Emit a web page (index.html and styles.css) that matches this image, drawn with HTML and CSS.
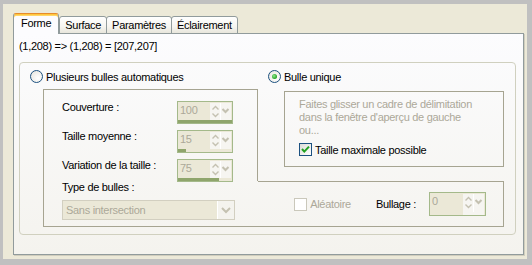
FILE: index.html
```html
<!DOCTYPE html>
<html lang="fr">
<head>
    <meta charset="UTF-8">
    <title>Forme</title>
    <link rel="stylesheet" href="styles.css">
</head>
<body>
    <div class="window">
        <div class="tabs">
            <div class="tab active">Forme</div>
            <div class="tab">Surface</div>
            <div class="tab">Paramètres</div>
            <div class="tab">Éclairement</div>
        </div>
        <div class="panel">
            <div class="coords">(1,208) =&gt; (1,208) = [207,207]</div>
            <div class="group">
                <div class="col-left">
                    <div class="option"><span class="radio"></span>Plusieurs bulles automatiques</div>
                    <div class="frame-left">
                        <div class="spins">
                            <div class="spin-row">
                                <span class="lbl">Couverture :</span>
                                <div class="spin">
                                    <div class="spin-top">
                                        <span class="spin-val">100</span>
                                        <span class="spin-btns"><svg width="21" height="17" viewBox="0 0 21 17"><path d="M2.5 6.5 L5.5 3.5 L8.5 6.5 M2.5 10.5 L5.5 13.5 L8.5 10.5" fill="none" stroke="#c4c1b1" stroke-width="1.4"/><path d="M10.5 0 V17" stroke="#fff"/><path d="M12.5 6 L15.5 9 L18.5 6" fill="none" stroke="#c4c1b1" stroke-width="2"/></svg></span>
                                    </div>
                                    <div class="spin-bar"><div class="spin-fill" style="width:100%"></div></div>
                                </div>
                            </div>
                            <div class="spin-row">
                                <span class="lbl">Taille moyenne :</span>
                                <div class="spin">
                                    <div class="spin-top">
                                        <span class="spin-val">15</span>
                                        <span class="spin-btns"><svg width="21" height="17" viewBox="0 0 21 17"><path d="M2.5 6.5 L5.5 3.5 L8.5 6.5 M2.5 10.5 L5.5 13.5 L8.5 10.5" fill="none" stroke="#c4c1b1" stroke-width="1.4"/><path d="M10.5 0 V17" stroke="#fff"/><path d="M12.5 6 L15.5 9 L18.5 6" fill="none" stroke="#c4c1b1" stroke-width="2"/></svg></span>
                                    </div>
                                    <div class="spin-bar"><div class="spin-fill" style="width:15%"></div></div>
                                </div>
                            </div>
                            <div class="spin-row">
                                <span class="lbl">Variation de la taille :</span>
                                <div class="spin">
                                    <div class="spin-top">
                                        <span class="spin-val">75</span>
                                        <span class="spin-btns"><svg width="21" height="17" viewBox="0 0 21 17"><path d="M2.5 6.5 L5.5 3.5 L8.5 6.5 M2.5 10.5 L5.5 13.5 L8.5 10.5" fill="none" stroke="#c4c1b1" stroke-width="1.4"/><path d="M10.5 0 V17" stroke="#fff"/><path d="M12.5 6 L15.5 9 L18.5 6" fill="none" stroke="#c4c1b1" stroke-width="2"/></svg></span>
                                    </div>
                                    <div class="spin-bar"><div class="spin-fill" style="width:75%"></div></div>
                                </div>
                            </div>
                        </div>
                        <div class="type-lbl">Type de bulles :</div>
                        <div class="select">
                            <span class="select-val">Sans intersection</span>
                            <span class="select-btn"><svg width="16" height="18" viewBox="0 0 16 18"><path d="M4 7 L8 11 L12 7" fill="none" stroke="#c4c1b1" stroke-width="2"/></svg></span>
                        </div>
                    </div>
                </div>
                <div class="col-right">
                    <div class="option right"><span class="radio checked"></span>Bulle unique</div>
                    <div class="bulle">
                        <div class="hint">Faites glisser un cadre de délimitation<br>dans la fenêtre d'aperçu de gauche<br>ou...</div>
                        <div class="check-row">
                            <span class="check"><svg width="11" height="11" viewBox="0 0 11 11"><path d="M2 5 L4.3 7.6 L9 2.6" fill="none" stroke="#21a121" stroke-width="2"/></svg></span>
                            Taille maximale possible
                        </div>
                    </div>
                    <div class="bottom-box">
                        <span class="check disabled"></span>
                        <span class="muted">Aléatoire</span>
                        <span class="bullage">Bullage :</span>
                        <div class="spin wide">
                            <div class="spin-top">
                                <span class="spin-val">0</span>
                                <span class="spin-btns"><svg width="21" height="18" viewBox="0 0 21 18"><path d="M2.5 6.5 L5.5 3.5 L8.5 6.5 M2.5 10.5 L5.5 13.5 L8.5 10.5" fill="none" stroke="#c4c1b1" stroke-width="1.4"/><path d="M10.5 0 V18" stroke="#fff"/><path d="M12.5 6 L15.5 9 L18.5 6" fill="none" stroke="#c4c1b1" stroke-width="2"/></svg></span>
                            </div>
                        </div>
                    </div>
                </div>
            </div>
        </div>
    </div>
</body>
</html>
```

FILE: styles.css
```css
body {
    margin: 0;
    background: #c0c0c0;
    font-family: "Liberation Sans", Arial, sans-serif;
    font-size: 11px;
    letter-spacing: -0.3px;
    color: #000;
}
.window {
    margin: 4px 5px 6px 3px;
    height: 255px;
    box-sizing: border-box;
    padding: 9px 3px 4px 10px;
    background: #ece9d8;
}
.tabs {
    display: flex;
    align-items: flex-end;
    height: 21px;
    margin-bottom: -1px;
    position: relative;
    z-index: 1;
}
.tab {
    height: 18px;
    box-sizing: border-box;
    padding: 0 5px;
    margin-right: -1px;
    border: 1px solid #919b9c;
    border-radius: 3px 3px 0 0;
    background: linear-gradient(#fff, #f6f5f0 60%, #e8e6dc);
    line-height: 16px;
}
.tab.active {
    height: 21px;
    padding: 2px 7px 0;
    border-top: 1px solid #e68b2c;
    border-bottom: none;
    background: #fcfcfe;
    box-shadow: inset 0 1px 0 #ffc73c, inset 0 2px 0 #ffd56a;
    line-height: 15px;
    margin-right: 0;
}
.panel {
    height: 222px;
    box-sizing: border-box;
    border: 1px solid #919b9c;
    background: linear-gradient(#fcfcfe, #f4f3ee);
    box-shadow: 1px 1px 0 #d0cdbd;
    padding: 6px 7px 0 5px;
}
.coords {
    line-height: 13px;
    height: 13px;
}
.group {
    margin-top: 9px;
    height: 173px;
    box-sizing: border-box;
    border: 1px solid #d0d0bf;
    border-radius: 4px;
    padding: 7px 0 0 10px;
    display: flex;
}
.col-left {
    width: 228px;
}
.col-right {
    width: 246px;
}
.option {
    display: flex;
    align-items: center;
    gap: 3px;
    height: 13px;
}
.option.right {
    margin-left: 10px;
}
.radio {
    width: 13px;
    height: 13px;
    box-sizing: border-box;
    border: 1px solid #1c5180;
    border-radius: 50%;
    background: radial-gradient(circle at 65% 65%, #fff, #ecebe6 70%, #d6d5cc);
    display: flex;
    align-items: center;
    justify-content: center;
    flex-shrink: 0;
}
.radio.checked::after {
    content: "";
    width: 5px;
    height: 5px;
    border-radius: 50%;
    background: radial-gradient(circle at 40% 40%, #8ee88e, #21a121 70%);
}
.frame-left {
    margin: 6px 0 0 13px;
    height: 138px;
    box-sizing: border-box;
    border: 1px solid #a6a491;
    border-right: none;
}
.spins {
    height: 91px;
    box-sizing: border-box;
    border-right: 1px solid #a6a491;
    padding: 11px 0 0 18px;
    display: flex;
    flex-direction: column;
    gap: 6px;
}
.spin-row {
    display: flex;
    height: 23px;
    flex-shrink: 0;
}
.lbl {
    width: 115px;
    line-height: 13px;
}
.spin {
    width: 56px;
    height: 23px;
    box-sizing: border-box;
    border: 1px solid #a4b98a;
    background: #ebe8d7;
    display: flex;
    flex-direction: column;
}
.spin.wide {
    width: 57px;
    height: 24px;
}
.spin-top {
    flex: 1;
    display: flex;
}
.spin-val {
    flex: 1;
    color: #aca899;
    padding: 2px 0 0 2px;
    line-height: 13px;
}
.spin-btns {
    width: 21px;
    margin: 1px 1px 0 0;
    background: #f6f5f1;
    display: flex;
}
.spin-bar {
    height: 4px;
}
.spin-fill {
    height: 100%;
    background: #8fa56c;
}
.type-lbl {
    padding-left: 18px;
    line-height: 13px;
}
.select {
    margin: 6px 0 0 18px;
    width: 173px;
    height: 20px;
    box-sizing: border-box;
    border: 1px solid #d2cfc0;
    background: #ebe8d7;
    display: flex;
}
.select-val {
    flex: 1;
    color: #aca899;
    padding-left: 3px;
    line-height: 18px;
}
.select-btn {
    width: 16px;
    background: #f4f3ee;
    border-left: 1px solid #fff;
    display: flex;
}
.bulle {
    margin: 8px 0 0 26px;
    width: 220px;
    height: 76px;
    box-sizing: border-box;
    border: 1px solid #a6a491;
    padding: 6px 0 0 14px;
}
.hint {
    color: #aca899;
    line-height: 13px;
    white-space: nowrap;
}
.check-row {
    margin-top: 6px;
    display: flex;
    align-items: center;
    gap: 3px;
    height: 13px;
}
.check {
    width: 13px;
    height: 13px;
    box-sizing: border-box;
    border: 1px solid #1c5180;
    background: linear-gradient(135deg, #dcdcd7, #fff);
    display: flex;
    align-items: center;
    justify-content: center;
    flex-shrink: 0;
}
.check.disabled {
    border-color: #cac8bb;
    background: #fff;
}
.bottom-box {
    margin-top: 14px;
    height: 46px;
    box-sizing: border-box;
    border: 1px solid #a6a491;
    border-left: none;
    padding-right: 17px;
    display: flex;
    align-items: center;
    justify-content: flex-end;
}
.muted {
    color: #aca899;
    margin-left: 3px;
}
.bullage {
    margin: 0 13px 0 25px;
}
```
